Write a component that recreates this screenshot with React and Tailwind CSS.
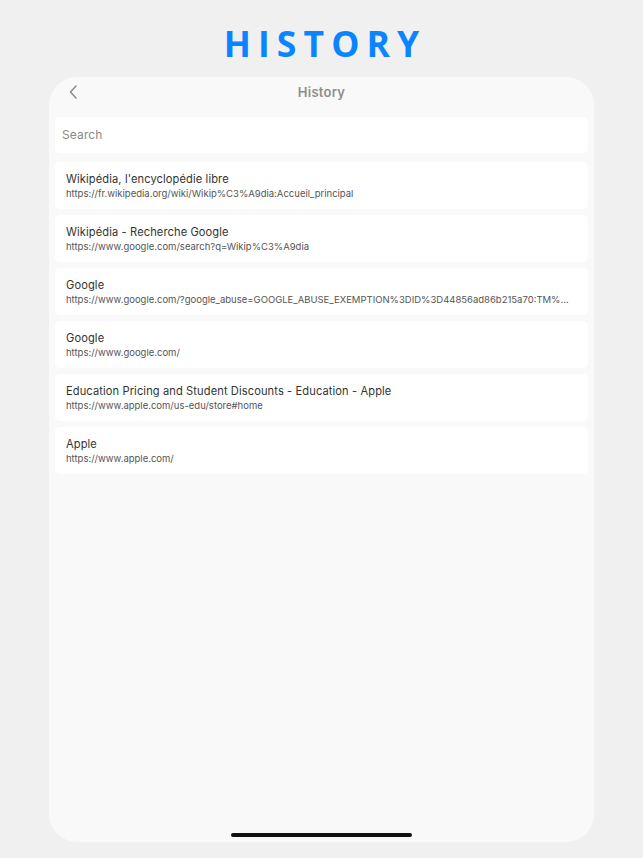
import React from 'react';

const items = [
  { title: "Wikipédia, l'encyclopédie libre", url: 'https://fr.wikipedia.org/wiki/Wikip%C3%A9dia:Accueil_principal' },
  { title: 'Wikipédia - Recherche Google', url: 'https://www.google.com/search?q=Wikip%C3%A9dia' },
  { title: 'Google', url: 'https://www.google.com/?google_abuse=GOOGLE_ABUSE_EXEMPTION%3DID%3D44856ad86b215a70:TM%…' },
  { title: 'Google', url: 'https://www.google.com/' },
  { title: 'Education Pricing and Student Discounts - Education - Apple', url: 'https://www.apple.com/us-edu/store#home' },
  { title: 'Apple', url: 'https://www.apple.com/' },
];

const App = () => {
  return (
    <div className="w-[643px] h-[858px] bg-[#f0f0f0] flex flex-col items-center overflow-hidden">
      <h1
        className="mt-[22px] h-[42px] text-[35.5px] leading-[42px] font-bold text-[#0a84ff] tracking-[0.2em] pl-[0.2em]"
        style={{ fontFamily: '"Open Sans", sans-serif' }}
      >
        HISTORY
      </h1>

      {/* Device frame */}
      <div
        className="mt-[13px] w-[545px] h-[765px] bg-[#f9f9f9] rounded-[28px] flex flex-col px-[6px]"
        style={{ fontFamily: 'Inter, "Noto Sans", sans-serif' }}
      >
        {/* Nav bar */}
        <div className="h-[40px] flex items-start pt-[7px] relative">
          <svg className="absolute left-[13px] top-[7px]" width="12" height="16" viewBox="0 0 12 16" fill="none">
            <path d="M8 2 L2.5 8 L8 14" stroke="#8e8e8e" strokeWidth="1.6" strokeLinecap="round" strokeLinejoin="round" />
          </svg>
          <span className="mx-auto text-[13px] leading-[16px] font-semibold text-[#8e8e8e] tracking-[0.02em]">History</span>
        </div>

        {/* Search */}
        <div className="h-[36px] bg-white rounded-[5px] flex items-center px-[7px]">
          <span className="text-[12px] text-[#8a8a8a] tracking-[0.01em]">Search</span>
        </div>

        {/* List */}
        <div className="mt-[9px] flex flex-col gap-[6px]">
          {items.map((item, i) => (
            <div key={i} className="h-[47px] bg-white rounded-[5px] flex flex-col justify-center px-[11px]">
              <p className="text-[11.1px] leading-[15px] text-[#333] tracking-[0.01em] truncate">{item.title}</p>
              <p className="text-[9.5px] leading-[13px] text-[#555] whitespace-nowrap">{item.url}</p>
            </div>
          ))}
        </div>

        {/* Home indicator */}
        <div className="mt-auto mb-[5px] mx-auto w-[181px] h-[4px] rounded-full bg-[#111]" />
      </div>
    </div>
  );
};

export default App;
